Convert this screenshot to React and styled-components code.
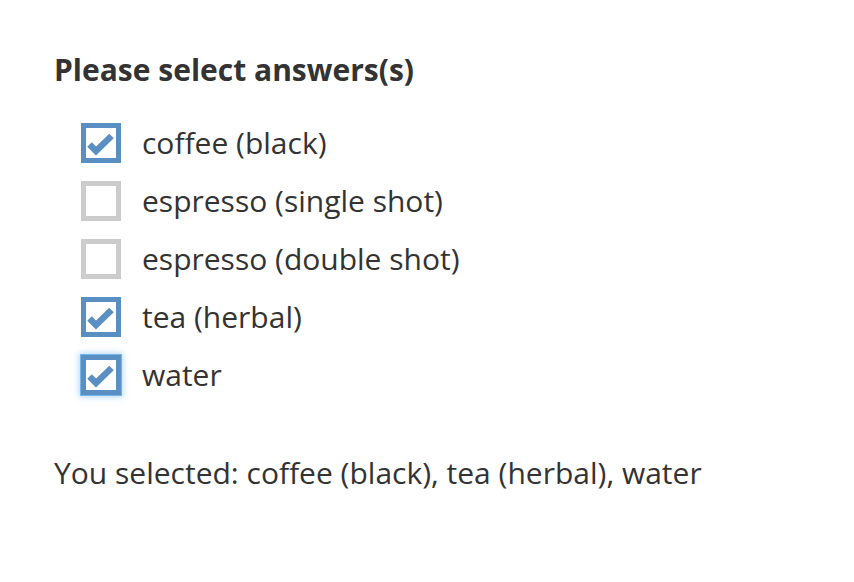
import React, { useState } from 'react';
import styled, { createGlobalStyle } from 'styled-components';

const GlobalStyle = createGlobalStyle`
  body {
    margin: 0;
    background: #ffffff;
    font-family: "Open Sans", "Liberation Sans", sans-serif;
    color: #333333;
  }
`;

const OPTIONS = [
  'coffee (black)',
  'espresso (single shot)',
  'espresso (double shot)',
  'tea (herbal)',
  'water'
];

const Page = styled.div`
  padding: 51px 0 0 54px;
`;

const Heading = styled.h2`
  margin: 0;
  font-size: 30px;
  font-weight: 700;
  line-height: 38px;
  color: #333333;
`;

const List = styled.div`
  display: flex;
  flex-direction: column;
  gap: 18px;
  margin: 34px 0 0 27px;
`;

const Row = styled.label`
  display: flex;
  align-items: center;
  gap: 21px;
  cursor: pointer;
  font-size: 30px;
  line-height: 40px;
  color: #333333;
`;

const Box = styled.span`
  box-sizing: border-box;
  width: 40px;
  height: 40px;
  flex: none;
  display: flex;
  align-items: center;
  justify-content: center;
  background: #ffffff;
  border: 5px solid ${({ checked }) => (checked ? '#5a8fc4' : '#cccccc')};
  ${({ focused }) =>
    focused &&
    `
    box-shadow: 0 0 0 1px #74b6ea, 0 0 6px 2px rgba(116, 182, 234, 0.55);
  `}
`;

const Result = styled.p`
  margin: 58px 0 0;
  font-size: 30px;
  line-height: 40px;
  color: #333333;
`;

const Check = () => (
  <svg width="30" height="30" viewBox="0 0 30 30">
    <polyline
      points="3.5,16.5 10,23 25.5,8"
      fill="none"
      stroke="#5a8fc4"
      strokeWidth="6.5"
      strokeLinejoin="miter"
    />
  </svg>
);

const App = () => {
  const [selected, setSelected] = useState([0, 3, 4]);
  const [focus, setFocus] = useState(4);

  const toggle = i => {
    setFocus(i);
    setSelected(s => (s.includes(i) ? s.filter(x => x !== i) : [...s, i].sort()));
  };

  return (
    <Page>
      <GlobalStyle />
      <Heading>Please select answers(s)</Heading>
      <List>
        {OPTIONS.map((opt, i) => {
          const on = selected.includes(i);
          return (
            <Row key={opt} onClick={() => toggle(i)}>
              <Box checked={on} focused={focus === i}>
                {on && <Check />}
              </Box>
              {opt}
            </Row>
          );
        })}
      </List>
      <Result>You selected: {selected.map(i => OPTIONS[i]).join(', ')}</Result>
    </Page>
  );
};

export default App;
